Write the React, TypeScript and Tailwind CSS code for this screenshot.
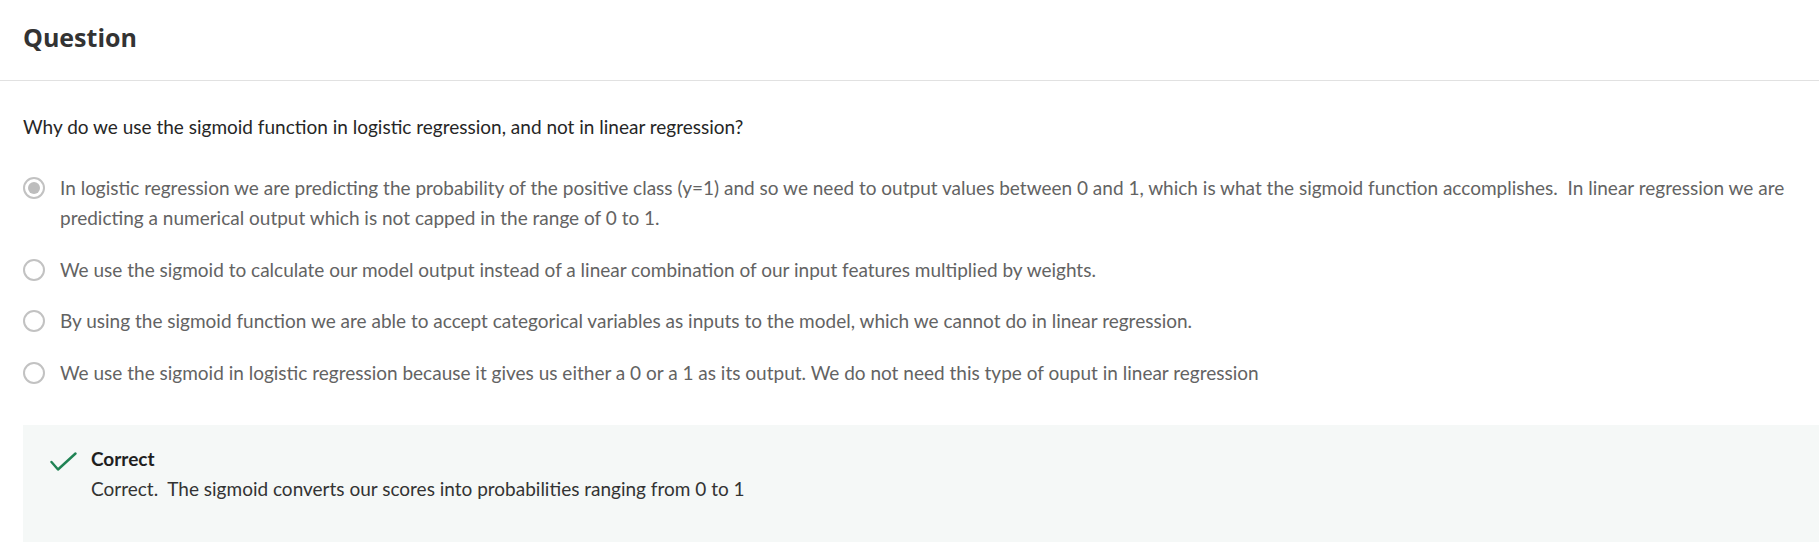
const options = [
  {
    lines: [
      "In logistic regression we are predicting the probability of the positive class (y=1) and so we need to output values between 0 and 1, which is what the sigmoid function accomplishes.\u00a0 In linear regression we are",
      "predicting a numerical output which is not capped in the range of 0 to 1.",
    ],
    selected: true,
  },
  {
    lines: [
      "We use the sigmoid to calculate our model output instead of a linear combination of our input features multiplied by weights.",
    ],
    selected: false,
  },
  {
    lines: [
      "By using the sigmoid function we are able to accept categorical variables as inputs to the model, which we cannot do in linear regression.",
    ],
    selected: false,
  },
  {
    lines: [
      "We use the sigmoid in logistic regression because it gives us either a 0 or a 1 as its output. We do not need this type of ouput in linear regression",
    ],
    selected: false,
  },
]

function Radio({ selected }: { selected: boolean }) {
  return (
    <div className="mt-[4px] flex h-[22px] w-[22px] shrink-0 items-center justify-center rounded-full border-2 border-[#c2c2c2] bg-white">
      {selected && <div className="h-[12px] w-[12px] rounded-full bg-[#bdbdbd]" />}
    </div>
  )
}

function CheckMark() {
  return (
    <svg width="27" height="20" viewBox="0 0 27 20" fill="none" className="mt-[8px] shrink-0">
      <polyline
        points="1.5,10 8,17.5 25.5,1.5"
        stroke="#1f8354"
        strokeWidth="2.4"
        strokeLinecap="round"
        strokeLinejoin="round"
      />
    </svg>
  )
}

export default function App() {
  return (
    <div className="min-h-screen bg-white font-['Lato',sans-serif] text-[19px]">
      <div className="h-[81px] border-b border-[#e1e1e1] px-[23px] pt-[20px]">
        <h2 className="font-['Open_Sans',sans-serif] text-[25px] font-bold leading-[34px] text-[#333333]">
          Question
        </h2>
      </div>

      <div className="pl-[23px]">
        <p className="mt-[31px] leading-[30px] text-[#262626]">
          Why do we use the sigmoid function in logistic regression, and not in linear regression?
        </p>

        <div className="mt-[31px] flex flex-col gap-[21.5px]">
          {options.map((option, index) => (
            <label key={index} className="flex items-start gap-[15px]">
              <Radio selected={option.selected} />
              <span className="whitespace-nowrap leading-[30px] text-[#636363]">
                {option.lines.map((line, i) => (
                  <span key={i} className="block">
                    {line}
                  </span>
                ))}
              </span>
            </label>
          ))}
        </div>

        <div className="mt-[37px] flex gap-[14px] bg-[#f5f8f7] pb-[38px] pl-[27px] pt-[19px]">
          <CheckMark />
          <div className="leading-[30px]">
            <div className="font-bold text-[#1f1f1f]">Correct</div>
            <div className="text-[#333333]">
              Correct.&nbsp; The sigmoid converts our scores into probabilities ranging from 0 to 1
            </div>
          </div>
        </div>
      </div>
    </div>
  )
}
